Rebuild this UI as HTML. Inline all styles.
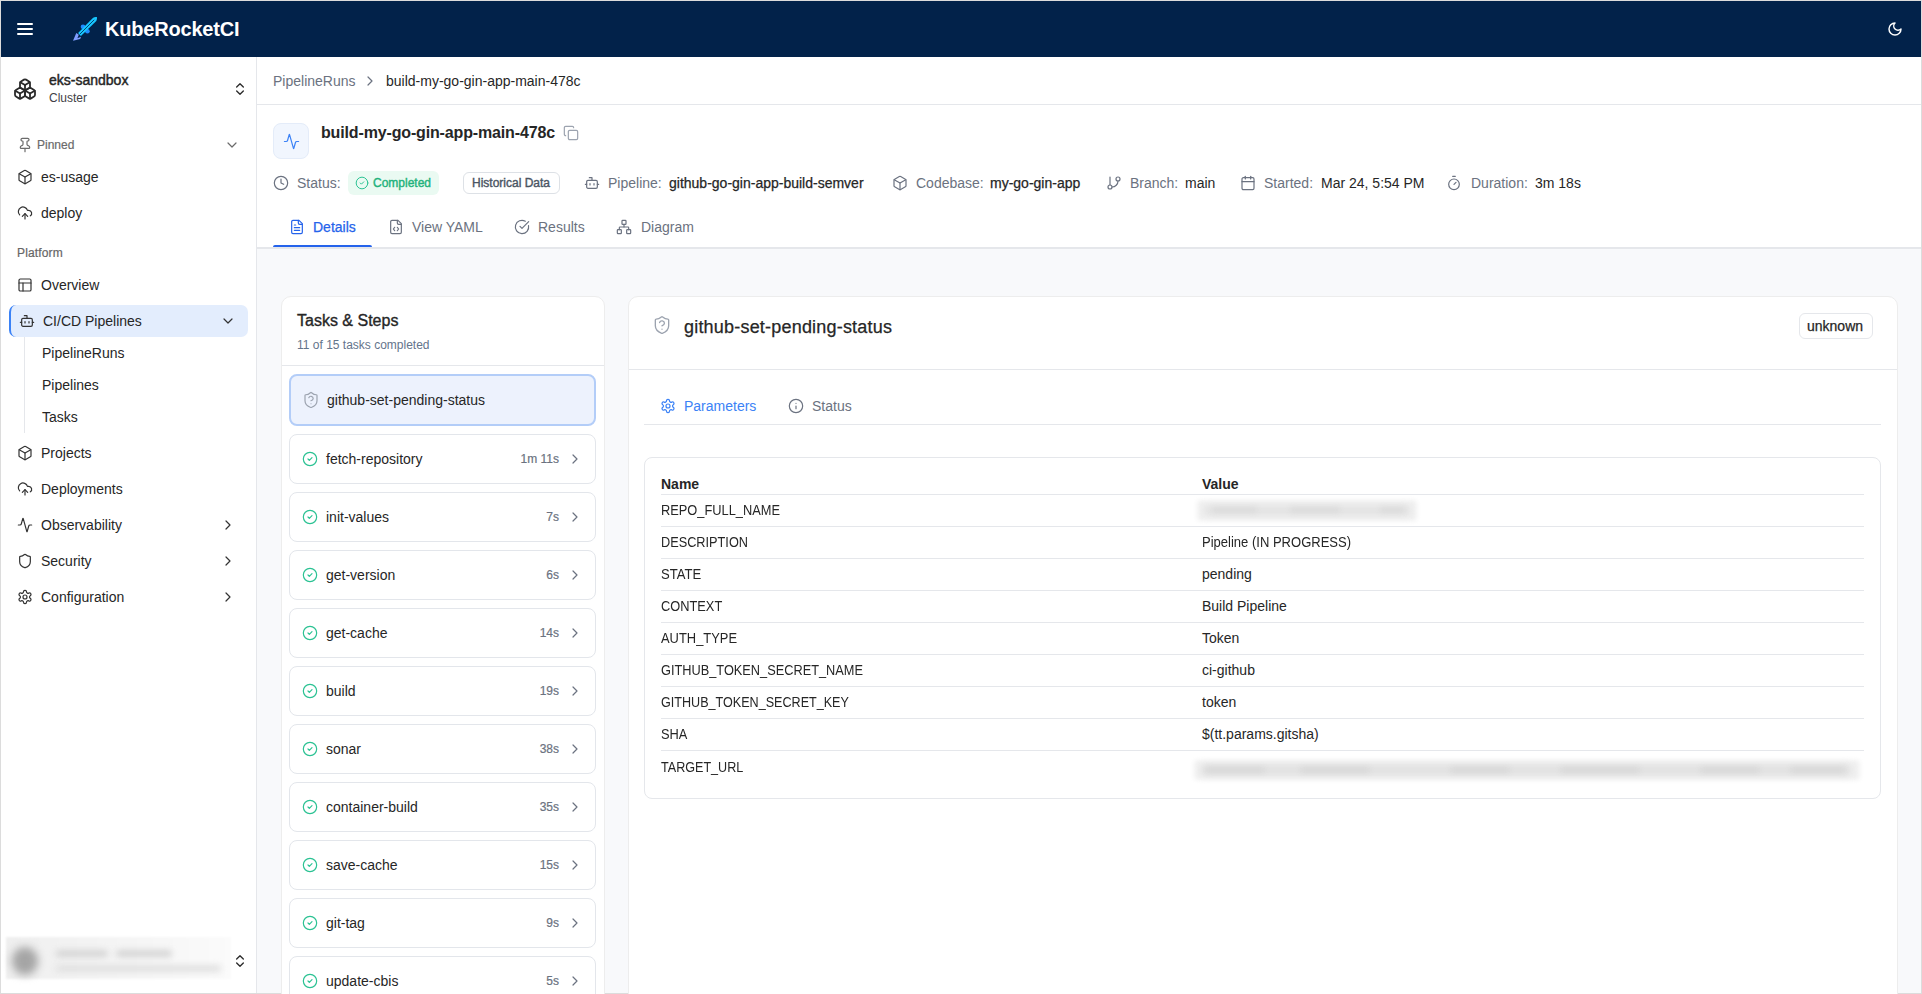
<!DOCTYPE html>
<html><head><meta charset="utf-8"><title>KubeRocketCI</title>
<style>
html,body{margin:0;padding:0;width:1922px;height:994px;overflow:hidden;background:#fff}
body{position:relative;font-family:"Liberation Sans",sans-serif}
.t{position:absolute;white-space:nowrap;line-height:1}
.m{-webkit-text-stroke:0.25px currentColor}
.i{position:absolute;overflow:visible}
.r{position:absolute}
</style></head><body>
<div class="r" style="left:0px;top:0px;width:1922px;height:994px;border:1px solid #dcdcdc;box-sizing:border-box;background:#fff"></div>
<div class="r" style="left:1px;top:1px;width:1920px;height:56px;background:#02224a"></div>
<div class="r" style="left:17px;top:23px;width:16px;height:2px;background:#fff;border-radius:1px"></div>
<div class="r" style="left:17px;top:28px;width:16px;height:2px;background:#fff;border-radius:1px"></div>
<div class="r" style="left:17px;top:33px;width:16px;height:2px;background:#fff;border-radius:1px"></div>
<svg class="i" style="left:68px;top:12px" width="34" height="34" viewBox="0 0 34 34">
<circle cx="15" cy="14.8" r="2.3" fill="#1f8cff"/>
<circle cx="19.4" cy="19.2" r="2.3" fill="#1f8cff"/>
<path d="M28.9 5.1 Q29.4 6.8 28.3 8.9 L12.9 23.9 L10.1 21.1 L25.1 5.7 Q26.9 4.6 28.9 5.1Z" fill="#16c6ff"/>
<path d="M12 22 L26.2 7.8" stroke="#02224a" stroke-width="0.8"/>
<path d="M5 28.8 L8.3 21 L10.8 22.8 L9.4 26.2 L13 24.8 L12.2 27 Z" fill="#7f9dff"/>
</svg>
<div class="t " style="left:105px;top:19px;font-size:20px;color:#ffffff;font-weight:bold;letter-spacing:-0.2px">KubeRocketCI</div>
<svg class="i" style="left:1886.80px;top:21.00px;" width="16" height="16" viewBox="0 0 24 24" fill="none" stroke="#ffffff" stroke-width="2.2" stroke-linecap="round" stroke-linejoin="round"><path d="M12 3a6 6 0 0 0 9 9 9 9 0 1 1-9-9Z"/></svg>
<div class="r" style="left:256px;top:57px;width:1px;height:936px;background:#e5e7eb"></div>
<svg class="i" style="left:13.00px;top:77.00px;" width="24" height="24" viewBox="0 0 24 24" fill="none" stroke="#2b2b2b" stroke-width="1.8" stroke-linecap="round" stroke-linejoin="round"><path d="M2.97 12.92A2 2 0 0 0 2 14.63v3.24a2 2 0 0 0 .97 1.71l3 1.8a2 2 0 0 0 2.06 0L12 19v-5.5l-5-3-4.030 2.42Z"/><path d="m7 16.5-4.74-2.85"/><path d="m7 16.5 5-3"/><path d="M7 16.5v5.17"/><path d="M12 13.5V19l3.97 2.38a2 2 0 0 0 2.06 0l3-1.8a2 2 0 0 0 .97-1.71v-3.24a2 2 0 0 0-.97-1.71L17 10.5l-5 3Z"/><path d="m17 16.5-5-3"/><path d="m17 16.5 4.74-2.85"/><path d="M17 16.5v5.17"/><path d="M7.97 4.42A2 2 0 0 0 7 6.13v4.37l5 3 5-3V6.13a2 2 0 0 0-.97-1.71l-3-1.8a2 2 0 0 0-2.06 0l-3 1.8Z"/><path d="M12 8 7.26 5.15"/><path d="m12 8 4.74-2.85"/><path d="M12 13.5V8"/></svg>
<div class="t " style="left:49px;top:73px;font-size:14px;color:#262626;-webkit-text-stroke:0.45px currentColor">eks-sandbox</div>
<div class="t " style="left:49px;top:92px;font-size:12px;color:#3f3f46;">Cluster</div>
<svg class="i" style="left:232.20px;top:81.20px;" width="16" height="16" viewBox="0 0 24 24" fill="none" stroke="#2b2b2b" stroke-width="2" stroke-linecap="round" stroke-linejoin="round"><path d="m7 15 5 5 5-5"/><path d="m7 9 5-5 5 5"/></svg>
<svg class="i" style="left:16.50px;top:137.00px;" width="16" height="16" viewBox="0 0 24 24" fill="none" stroke="#6b6b6b" stroke-width="1.8" stroke-linecap="round" stroke-linejoin="round"><path d="M12 17v5"/><path d="M9 10.76a2 2 0 0 1-1.11 1.79l-1.78.9A2 2 0 0 0 5 15.24V16a1 1 0 0 0 1 1h12a1 1 0 0 0 1-1v-.76a2 2 0 0 0-1.11-1.79l-1.78-.9A2 2 0 0 1 15 10.76V7a1 1 0 0 1 1-1 2 2 0 0 0 0-4H8a2 2 0 0 0 0 4 1 1 0 0 1 1 1z"/></svg>
<div class="t " style="left:37px;top:139px;font-size:12px;color:#6b6b6b;-webkit-text-stroke:0.2px currentColor">Pinned</div>
<svg class="i" style="left:224.40px;top:137.00px;" width="16" height="16" viewBox="0 0 24 24" fill="none" stroke="#6b6b6b" stroke-width="1.8" stroke-linecap="round" stroke-linejoin="round"><path d="m6 9 6 6 6-6"/></svg>
<svg class="i" style="left:17.00px;top:169.00px;" width="16" height="16" viewBox="0 0 24 24" fill="none" stroke="#333" stroke-width="1.8" stroke-linecap="round" stroke-linejoin="round"><path d="M21 8a2 2 0 0 0-1-1.73l-7-4a2 2 0 0 0-2 0l-7 4A2 2 0 0 0 3 8v8a2 2 0 0 0 1 1.73l7 4a2 2 0 0 0 2 0l7-4A2 2 0 0 0 21 16Z"/><path d="m3.3 7 8.7 5 8.7-5"/><path d="M12 22V12"/></svg>
<div class="t " style="left:41px;top:170px;font-size:14px;color:#262626;">es-usage</div>
<svg class="i" style="left:17.00px;top:205.00px;" width="16" height="16" viewBox="0 0 24 24" fill="none" stroke="#333" stroke-width="1.8" stroke-linecap="round" stroke-linejoin="round"><path d="M12 13v8"/><path d="M4 14.899A7 7 0 1 1 15.71 8h1.79a4.5 4.5 0 0 1 2.5 8.242"/><path d="m8 17 4-4 4 4"/></svg>
<div class="t " style="left:41px;top:206px;font-size:14px;color:#262626;">deploy</div>
<div class="t " style="left:17px;top:247px;font-size:12px;color:#666666;letter-spacing:0.15px;-webkit-text-stroke:0.2px currentColor">Platform</div>
<svg class="i" style="left:17.00px;top:277.00px;" width="16" height="16" viewBox="0 0 24 24" fill="none" stroke="#333" stroke-width="1.8" stroke-linecap="round" stroke-linejoin="round"><rect width="18" height="18" x="3" y="3" rx="2"/><path d="M3 9h18"/><path d="M9 21V9"/></svg>
<div class="t " style="left:41px;top:278px;font-size:14px;color:#262626;">Overview</div>
<div class="r" style="left:9px;top:305px;width:239px;height:32px;background:#e3edfd;border-radius:7px;border-left:2px solid #3b82f6;box-sizing:border-box"></div>
<svg class="i" style="left:18.80px;top:313.00px;" width="16" height="16" viewBox="0 0 24 24" fill="none" stroke="#333" stroke-width="1.8" stroke-linecap="round" stroke-linejoin="round"><path d="M12 8V4H8"/><rect width="16" height="12" x="4" y="8" rx="2"/><path d="M2 14h2"/><path d="M20 14h2"/><path d="M15 13v2"/><path d="M9 13v2"/></svg>
<div class="t " style="left:43px;top:314px;font-size:14px;color:#262626;">CI/CD Pipelines</div>
<svg class="i" style="left:220.20px;top:313.00px;" width="16" height="16" viewBox="0 0 24 24" fill="none" stroke="#333" stroke-width="1.8" stroke-linecap="round" stroke-linejoin="round"><path d="m6 9 6 6 6-6"/></svg>
<div class="r" style="left:24px;top:337px;width:1px;height:96px;background:#e5e7eb"></div>
<div class="t " style="left:42px;top:346px;font-size:14px;color:#262626;">PipelineRuns</div>
<div class="t " style="left:42px;top:378px;font-size:14px;color:#262626;">Pipelines</div>
<div class="t " style="left:42px;top:410px;font-size:14px;color:#262626;">Tasks</div>
<svg class="i" style="left:17.00px;top:445.00px;" width="16" height="16" viewBox="0 0 24 24" fill="none" stroke="#333" stroke-width="1.8" stroke-linecap="round" stroke-linejoin="round"><path d="M21 8a2 2 0 0 0-1-1.73l-7-4a2 2 0 0 0-2 0l-7 4A2 2 0 0 0 3 8v8a2 2 0 0 0 1 1.73l7 4a2 2 0 0 0 2 0l7-4A2 2 0 0 0 21 16Z"/><path d="m3.3 7 8.7 5 8.7-5"/><path d="M12 22V12"/></svg>
<div class="t " style="left:41px;top:446px;font-size:14px;color:#262626;">Projects</div>
<svg class="i" style="left:17.00px;top:481.00px;" width="16" height="16" viewBox="0 0 24 24" fill="none" stroke="#333" stroke-width="1.8" stroke-linecap="round" stroke-linejoin="round"><path d="M12 13v8"/><path d="M4 14.899A7 7 0 1 1 15.71 8h1.79a4.5 4.5 0 0 1 2.5 8.242"/><path d="m8 17 4-4 4 4"/></svg>
<div class="t " style="left:41px;top:482px;font-size:14px;color:#262626;">Deployments</div>
<svg class="i" style="left:17.00px;top:517.00px;" width="16" height="16" viewBox="0 0 24 24" fill="none" stroke="#333" stroke-width="1.8" stroke-linecap="round" stroke-linejoin="round"><path d="M22 12h-2.48a2 2 0 0 0-1.93 1.46l-2.35 8.36a.25.25 0 0 1-.48 0L9.24 2.18a.25.25 0 0 0-.48 0l-2.35 8.36A2 2 0 0 1 4.49 12H2"/></svg>
<div class="t " style="left:41px;top:518px;font-size:14px;color:#262626;">Observability</div>
<svg class="i" style="left:17.00px;top:553.00px;" width="16" height="16" viewBox="0 0 24 24" fill="none" stroke="#333" stroke-width="1.8" stroke-linecap="round" stroke-linejoin="round"><path d="M20 13c0 5-3.5 7.5-7.66 8.95a1 1 0 0 1-.67-.01C7.5 20.5 4 18 4 13V6a1 1 0 0 1 1-1c2 0 4.5-1.2 6.24-2.72a1.17 1.17 0 0 1 1.52 0C14.51 3.810 17 5 19 5a1 1 0 0 1 1 1z"/></svg>
<div class="t " style="left:41px;top:554px;font-size:14px;color:#262626;">Security</div>
<svg class="i" style="left:17.00px;top:589.00px;" width="16" height="16" viewBox="0 0 24 24" fill="none" stroke="#333" stroke-width="1.8" stroke-linecap="round" stroke-linejoin="round"><path d="M12.22 2h-.44a2 2 0 0 0-2 2v.18a2 2 0 0 1-1 1.73l-.43.25a2 2 0 0 1-2 0l-.15-.08a2 2 0 0 0-2.73.73l-.22.38a2 2 0 0 0 .73 2.73l.15.1a2 2 0 0 1 1 1.72v.51a2 2 0 0 1-1 1.74l-.15.09a2 2 0 0 0-.73 2.73l.22.38a2 2 0 0 0 2.73.73l.15-.08a2 2 0 0 1 2 0l.43.25a2 2 0 0 1 1 1.73V20a2 2 0 0 0 2 2h.44a2 2 0 0 0 2-2v-.18a2 2 0 0 1 1-1.73l.43-.25a2 2 0 0 1 2 0l.15.08a2 2 0 0 0 2.73-.73l.22-.39a2 2 0 0 0-.73-2.73l-.15-.08a2 2 0 0 1-1-1.74v-.5a2 2 0 0 1 1-1.74l.15-.09a2 2 0 0 0 .73-2.73l-.22-.38a2 2 0 0 0-2.73-.73l-.15.08a2 2 0 0 1-2 0l-.43-.25a2 2 0 0 1-1-1.73V4a2 2 0 0 0-2-2z"/><circle cx="12" cy="12" r="3"/></svg>
<div class="t " style="left:41px;top:590px;font-size:14px;color:#262626;">Configuration</div>
<svg class="i" style="left:220.00px;top:517.00px;" width="16" height="16" viewBox="0 0 24 24" fill="none" stroke="#333" stroke-width="1.8" stroke-linecap="round" stroke-linejoin="round"><path d="m9 18 6-6-6-6"/></svg>
<svg class="i" style="left:220.00px;top:553.00px;" width="16" height="16" viewBox="0 0 24 24" fill="none" stroke="#333" stroke-width="1.8" stroke-linecap="round" stroke-linejoin="round"><path d="m9 18 6-6-6-6"/></svg>
<svg class="i" style="left:220.00px;top:589.00px;" width="16" height="16" viewBox="0 0 24 24" fill="none" stroke="#333" stroke-width="1.8" stroke-linecap="round" stroke-linejoin="round"><path d="m9 18 6-6-6-6"/></svg>
<div class="r" style="left:6px;top:937px;width:225px;height:42px;background:linear-gradient(90deg,#efefef,#f6f6f6 60%,#fbfbfb);filter:blur(1px)"></div>
<div class="r" style="left:12px;top:947px;width:26px;height:28px;background:#a5a5a5;border-radius:50%;filter:blur(4px)"></div>
<div class="r" style="left:56px;top:950px;width:52px;height:7px;background:#d4d4d4;border-radius:4px;filter:blur(3px)"></div>
<div class="r" style="left:116px;top:950px;width:56px;height:7px;background:#d4d4d4;border-radius:4px;filter:blur(3px)"></div>
<div class="r" style="left:56px;top:965px;width:165px;height:7px;background:#e0e0e0;border-radius:4px;filter:blur(3px)"></div>
<svg class="i" style="left:232.00px;top:953.00px;" width="16" height="16" viewBox="0 0 24 24" fill="none" stroke="#2b2b2b" stroke-width="2" stroke-linecap="round" stroke-linejoin="round"><path d="m7 15 5 5 5-5"/><path d="m7 9 5-5 5 5"/></svg>
<div class="r" style="left:257px;top:104px;width:1664px;height:1px;background:#e5e7eb"></div>
<div class="t " style="left:273px;top:74px;font-size:14px;color:#6b7280;">PipelineRuns</div>
<svg class="i" style="left:362.00px;top:73.00px;" width="16" height="16" viewBox="0 0 24 24" fill="none" stroke="#6b7280" stroke-width="1.8" stroke-linecap="round" stroke-linejoin="round"><path d="m9 18 6-6-6-6"/></svg>
<div class="t " style="left:386px;top:74px;font-size:14px;color:#262626;">build-my-go-gin-app-main-478c</div>
<div class="r" style="left:273px;top:123px;width:36px;height:36px;background:#f1f6fe;border:1px solid #e4ecf9;border-radius:8px;box-sizing:border-box"></div>
<svg class="i" style="left:282.50px;top:132.50px;" width="17" height="17" viewBox="0 0 24 24" fill="none" stroke="#3b82f6" stroke-width="1.7" stroke-linecap="round" stroke-linejoin="round"><path d="M22 12h-2.48a2 2 0 0 0-1.93 1.46l-2.35 8.36a.25.25 0 0 1-.48 0L9.24 2.18a.25.25 0 0 0-.48 0l-2.35 8.36A2 2 0 0 1 4.49 12H2"/></svg>
<div class="t " style="left:321px;top:125px;font-size:16px;color:#262626;font-weight:bold;letter-spacing:-0.15px">build-my-go-gin-app-main-478c</div>
<svg class="i" style="left:563.00px;top:124.70px;" width="16" height="16" viewBox="0 0 24 24" fill="none" stroke="#9ca3af" stroke-width="1.8" stroke-linecap="round" stroke-linejoin="round"><rect width="14" height="14" x="8" y="8" rx="2" ry="2"/><path d="M4 16c-1.1 0-2-.9-2-2V4c0-1.1.9-2 2-2h10c1.1 0 2 .9 2 2"/></svg>
<svg class="i" style="left:273.00px;top:174.70px;" width="16" height="16" viewBox="0 0 24 24" fill="none" stroke="#6b7280" stroke-width="1.8" stroke-linecap="round" stroke-linejoin="round"><circle cx="12" cy="12" r="10"/><path d="M12 6v6l4 2"/></svg>
<div class="t " style="left:297px;top:176px;font-size:14px;color:#6b7280;">Status:</div>
<div class="r" style="left:348px;top:171px;width:91px;height:24px;background:#eafaf2;border-radius:6px"></div>
<svg class="i" style="left:354.80px;top:176.00px;" width="14" height="14" viewBox="0 0 24 24" fill="none" stroke="#2bc293" stroke-width="1.7" stroke-linecap="round" stroke-linejoin="round"><circle cx="12" cy="12" r="10"/><path d="m9 12 2 2 4-4"/></svg>
<div class="t " style="left:373px;top:177px;font-size:12px;color:#1fb27c;-webkit-text-stroke:0.4px currentColor">Completed</div>
<div class="r" style="left:463px;top:172px;width:97px;height:22px;border:1px solid #dde1e6;border-radius:6px;box-sizing:border-box"></div>
<div class="t " style="left:472px;top:177px;font-size:12px;color:#4b5563;-webkit-text-stroke:0.4px currentColor">Historical Data</div>
<svg class="i" style="left:583.70px;top:175.00px;" width="16" height="16" viewBox="0 0 24 24" fill="none" stroke="#6b7280" stroke-width="1.8" stroke-linecap="round" stroke-linejoin="round"><path d="M12 8V4H8"/><rect width="16" height="12" x="4" y="8" rx="2"/><path d="M2 14h2"/><path d="M20 14h2"/><path d="M15 13v2"/><path d="M9 13v2"/></svg>
<div class="t " style="left:608px;top:176px;font-size:14px;color:#6b7280;">Pipeline:</div>
<div class="t m" style="left:669px;top:176px;font-size:14px;color:#262626;">github-go-gin-app-build-semver</div>
<svg class="i" style="left:892.00px;top:175.00px;" width="16" height="16" viewBox="0 0 24 24" fill="none" stroke="#6b7280" stroke-width="1.8" stroke-linecap="round" stroke-linejoin="round"><path d="M21 8a2 2 0 0 0-1-1.73l-7-4a2 2 0 0 0-2 0l-7 4A2 2 0 0 0 3 8v8a2 2 0 0 0 1 1.73l7 4a2 2 0 0 0 2 0l7-4A2 2 0 0 0 21 16Z"/><path d="m3.3 7 8.7 5 8.7-5"/><path d="M12 22V12"/></svg>
<div class="t " style="left:916px;top:176px;font-size:14px;color:#6b7280;">Codebase:</div>
<div class="t m" style="left:990px;top:176px;font-size:14px;color:#262626;">my-go-gin-app</div>
<svg class="i" style="left:1105.80px;top:175.00px;" width="16" height="16" viewBox="0 0 24 24" fill="none" stroke="#6b7280" stroke-width="1.8" stroke-linecap="round" stroke-linejoin="round"><path d="M6 3v12"/><circle cx="18" cy="6" r="3"/><circle cx="6" cy="18" r="3"/><path d="M18 9a9 9 0 0 1-9 9"/></svg>
<div class="t " style="left:1130px;top:176px;font-size:14px;color:#6b7280;">Branch:</div>
<div class="t " style="left:1185px;top:176px;font-size:14px;color:#262626;">main</div>
<svg class="i" style="left:1239.80px;top:175.00px;" width="16" height="16" viewBox="0 0 24 24" fill="none" stroke="#6b7280" stroke-width="1.8" stroke-linecap="round" stroke-linejoin="round"><path d="M8 2v4"/><path d="M16 2v4"/><rect width="18" height="18" x="3" y="4" rx="2"/><path d="M3 10h18"/></svg>
<div class="t " style="left:1264px;top:176px;font-size:14px;color:#6b7280;">Started:</div>
<div class="t " style="left:1321px;top:176px;font-size:14px;color:#262626;">Mar 24, 5:54 PM</div>
<svg class="i" style="left:1446.00px;top:175.00px;" width="16" height="16" viewBox="0 0 24 24" fill="none" stroke="#6b7280" stroke-width="1.8" stroke-linecap="round" stroke-linejoin="round"><path d="M10 2h4"/><path d="M12 14l3-3"/><circle cx="12" cy="14" r="8"/></svg>
<div class="t " style="left:1471px;top:176px;font-size:14px;color:#6b7280;">Duration:</div>
<div class="t " style="left:1535px;top:176px;font-size:14px;color:#262626;">3m 18s</div>
<svg class="i" style="left:289.00px;top:219.00px;" width="16" height="16" viewBox="0 0 24 24" fill="none" stroke="#2563eb" stroke-width="1.8" stroke-linecap="round" stroke-linejoin="round"><path d="M15 2H6a2 2 0 0 0-2 2v16a2 2 0 0 0 2 2h12a2 2 0 0 0 2-2V7Z"/><path d="M14 2v4a2 2 0 0 0 2 2h4"/><path d="M10 9H8"/><path d="M16 13H8"/><path d="M16 17H8"/></svg>
<div class="t m" style="left:313px;top:220px;font-size:14px;color:#2563eb;">Details</div>
<svg class="i" style="left:388.20px;top:219.00px;" width="16" height="16" viewBox="0 0 24 24" fill="none" stroke="#6b7280" stroke-width="1.8" stroke-linecap="round" stroke-linejoin="round"><path d="M10 12.5 8 15l2 2.5"/><path d="m14 12.5 2 2.5-2 2.5"/><path d="M14 2v4a2 2 0 0 0 2 2h4"/><path d="M15 2H6a2 2 0 0 0-2 2v16a2 2 0 0 0 2 2h12a2 2 0 0 0 2-2V7z"/></svg>
<div class="t " style="left:412px;top:220px;font-size:14px;color:#6b7280;">View YAML</div>
<svg class="i" style="left:514.10px;top:219.00px;" width="16" height="16" viewBox="0 0 24 24" fill="none" stroke="#6b7280" stroke-width="1.8" stroke-linecap="round" stroke-linejoin="round"><path d="M21.801 10A10 10 0 1 1 17 3.335"/><path d="m9 11 3 3L22 4"/></svg>
<div class="t " style="left:538px;top:220px;font-size:14px;color:#6b7280;">Results</div>
<svg class="i" style="left:615.60px;top:219.00px;" width="16" height="16" viewBox="0 0 24 24" fill="none" stroke="#6b7280" stroke-width="1.8" stroke-linecap="round" stroke-linejoin="round"><rect x="16" y="16" width="6" height="6" rx="1"/><rect x="2" y="16" width="6" height="6" rx="1"/><rect x="9" y="2" width="6" height="6" rx="1"/><path d="M5 16v-3a1 1 0 0 1 1-1h12a1 1 0 0 1 1 1v3"/><path d="M12 12V8"/></svg>
<div class="t " style="left:641px;top:220px;font-size:14px;color:#6b7280;">Diagram</div>
<div class="r" style="left:257px;top:247px;width:1664px;height:2px;background:#e5e7eb"></div>
<div class="r" style="left:273px;top:245px;width:99px;height:2px;background:#2563eb;border-radius:2px 2px 0 0"></div>
<div class="r" style="left:257px;top:249px;width:1664px;height:744px;background:#f8f9fb"></div>
<div class="r" style="left:281px;top:296px;width:324px;height:721px;background:#fff;border:1px solid #ededed;border-radius:10px;box-sizing:border-box"></div>
<div class="t " style="left:297px;top:313px;font-size:16px;color:#262626;-webkit-text-stroke:0.35px currentColor">Tasks &amp; Steps</div>
<div class="t " style="left:297px;top:339px;font-size:12px;color:#64748b;">11 of 15 tasks completed</div>
<div class="r" style="left:282px;top:365px;width:322px;height:1px;background:#e5e7eb"></div>
<div class="r" style="left:289px;top:374px;width:307px;height:52px;background:#edf2fd;border:2px solid #b3cdf8;border-radius:8px;box-sizing:border-box"></div>
<svg class="i" style="left:302.00px;top:391.00px;" width="18" height="18" viewBox="0 0 24 24" fill="none" stroke="#9ca3af" stroke-width="1.6" stroke-linecap="round" stroke-linejoin="round"><path d="M20 13c0 5-3.5 7.5-7.66 8.95a1 1 0 0 1-.67-.01C7.5 20.5 4 18 4 13V6a1 1 0 0 1 1-1c2 0 4.5-1.2 6.24-2.72a1.17 1.17 0 0 1 1.52 0C14.51 3.810 17 5 19 5a1 1 0 0 1 1 1z"/><path d="M9.1 9a3 3 0 0 1 5.82 1c0 2-3 3-3 3"/><path d="M12 17h.01"/></svg>
<div class="t " style="left:327px;top:393px;font-size:14px;color:#262626;">github-set-pending-status</div>
<div class="r" style="left:289px;top:434px;width:307px;height:50px;background:#fff;border:1px solid #e3e6eb;border-radius:8px;box-sizing:border-box"></div>
<svg class="i" style="left:302.20px;top:450.80px;" width="16" height="16" viewBox="0 0 24 24" fill="none" stroke="#2bc293" stroke-width="1.8" stroke-linecap="round" stroke-linejoin="round"><circle cx="12" cy="12" r="10"/><path d="m9 12 2 2 4-4"/></svg>
<div class="t " style="left:326px;top:452px;font-size:14px;color:#262626;">fetch-repository</div>
<div class="t " style="right:1363px;top:453px;font-size:12px;color:#6b7280;-webkit-text-stroke:0.2px currentColor">1m 11s</div>
<svg class="i" style="left:567.00px;top:450.80px;" width="16" height="16" viewBox="0 0 24 24" fill="none" stroke="#6b7280" stroke-width="1.8" stroke-linecap="round" stroke-linejoin="round"><path d="m9 18 6-6-6-6"/></svg>
<div class="r" style="left:289px;top:492px;width:307px;height:50px;background:#fff;border:1px solid #e3e6eb;border-radius:8px;box-sizing:border-box"></div>
<svg class="i" style="left:302.20px;top:508.80px;" width="16" height="16" viewBox="0 0 24 24" fill="none" stroke="#2bc293" stroke-width="1.8" stroke-linecap="round" stroke-linejoin="round"><circle cx="12" cy="12" r="10"/><path d="m9 12 2 2 4-4"/></svg>
<div class="t " style="left:326px;top:510px;font-size:14px;color:#262626;">init-values</div>
<div class="t " style="right:1363px;top:511px;font-size:12px;color:#6b7280;-webkit-text-stroke:0.2px currentColor">7s</div>
<svg class="i" style="left:567.00px;top:508.80px;" width="16" height="16" viewBox="0 0 24 24" fill="none" stroke="#6b7280" stroke-width="1.8" stroke-linecap="round" stroke-linejoin="round"><path d="m9 18 6-6-6-6"/></svg>
<div class="r" style="left:289px;top:550px;width:307px;height:50px;background:#fff;border:1px solid #e3e6eb;border-radius:8px;box-sizing:border-box"></div>
<svg class="i" style="left:302.20px;top:566.80px;" width="16" height="16" viewBox="0 0 24 24" fill="none" stroke="#2bc293" stroke-width="1.8" stroke-linecap="round" stroke-linejoin="round"><circle cx="12" cy="12" r="10"/><path d="m9 12 2 2 4-4"/></svg>
<div class="t " style="left:326px;top:568px;font-size:14px;color:#262626;">get-version</div>
<div class="t " style="right:1363px;top:569px;font-size:12px;color:#6b7280;-webkit-text-stroke:0.2px currentColor">6s</div>
<svg class="i" style="left:567.00px;top:566.80px;" width="16" height="16" viewBox="0 0 24 24" fill="none" stroke="#6b7280" stroke-width="1.8" stroke-linecap="round" stroke-linejoin="round"><path d="m9 18 6-6-6-6"/></svg>
<div class="r" style="left:289px;top:608px;width:307px;height:50px;background:#fff;border:1px solid #e3e6eb;border-radius:8px;box-sizing:border-box"></div>
<svg class="i" style="left:302.20px;top:624.80px;" width="16" height="16" viewBox="0 0 24 24" fill="none" stroke="#2bc293" stroke-width="1.8" stroke-linecap="round" stroke-linejoin="round"><circle cx="12" cy="12" r="10"/><path d="m9 12 2 2 4-4"/></svg>
<div class="t " style="left:326px;top:626px;font-size:14px;color:#262626;">get-cache</div>
<div class="t " style="right:1363px;top:627px;font-size:12px;color:#6b7280;-webkit-text-stroke:0.2px currentColor">14s</div>
<svg class="i" style="left:567.00px;top:624.80px;" width="16" height="16" viewBox="0 0 24 24" fill="none" stroke="#6b7280" stroke-width="1.8" stroke-linecap="round" stroke-linejoin="round"><path d="m9 18 6-6-6-6"/></svg>
<div class="r" style="left:289px;top:666px;width:307px;height:50px;background:#fff;border:1px solid #e3e6eb;border-radius:8px;box-sizing:border-box"></div>
<svg class="i" style="left:302.20px;top:682.80px;" width="16" height="16" viewBox="0 0 24 24" fill="none" stroke="#2bc293" stroke-width="1.8" stroke-linecap="round" stroke-linejoin="round"><circle cx="12" cy="12" r="10"/><path d="m9 12 2 2 4-4"/></svg>
<div class="t " style="left:326px;top:684px;font-size:14px;color:#262626;">build</div>
<div class="t " style="right:1363px;top:685px;font-size:12px;color:#6b7280;-webkit-text-stroke:0.2px currentColor">19s</div>
<svg class="i" style="left:567.00px;top:682.80px;" width="16" height="16" viewBox="0 0 24 24" fill="none" stroke="#6b7280" stroke-width="1.8" stroke-linecap="round" stroke-linejoin="round"><path d="m9 18 6-6-6-6"/></svg>
<div class="r" style="left:289px;top:724px;width:307px;height:50px;background:#fff;border:1px solid #e3e6eb;border-radius:8px;box-sizing:border-box"></div>
<svg class="i" style="left:302.20px;top:740.80px;" width="16" height="16" viewBox="0 0 24 24" fill="none" stroke="#2bc293" stroke-width="1.8" stroke-linecap="round" stroke-linejoin="round"><circle cx="12" cy="12" r="10"/><path d="m9 12 2 2 4-4"/></svg>
<div class="t " style="left:326px;top:742px;font-size:14px;color:#262626;">sonar</div>
<div class="t " style="right:1363px;top:743px;font-size:12px;color:#6b7280;-webkit-text-stroke:0.2px currentColor">38s</div>
<svg class="i" style="left:567.00px;top:740.80px;" width="16" height="16" viewBox="0 0 24 24" fill="none" stroke="#6b7280" stroke-width="1.8" stroke-linecap="round" stroke-linejoin="round"><path d="m9 18 6-6-6-6"/></svg>
<div class="r" style="left:289px;top:782px;width:307px;height:50px;background:#fff;border:1px solid #e3e6eb;border-radius:8px;box-sizing:border-box"></div>
<svg class="i" style="left:302.20px;top:798.80px;" width="16" height="16" viewBox="0 0 24 24" fill="none" stroke="#2bc293" stroke-width="1.8" stroke-linecap="round" stroke-linejoin="round"><circle cx="12" cy="12" r="10"/><path d="m9 12 2 2 4-4"/></svg>
<div class="t " style="left:326px;top:800px;font-size:14px;color:#262626;">container-build</div>
<div class="t " style="right:1363px;top:801px;font-size:12px;color:#6b7280;-webkit-text-stroke:0.2px currentColor">35s</div>
<svg class="i" style="left:567.00px;top:798.80px;" width="16" height="16" viewBox="0 0 24 24" fill="none" stroke="#6b7280" stroke-width="1.8" stroke-linecap="round" stroke-linejoin="round"><path d="m9 18 6-6-6-6"/></svg>
<div class="r" style="left:289px;top:840px;width:307px;height:50px;background:#fff;border:1px solid #e3e6eb;border-radius:8px;box-sizing:border-box"></div>
<svg class="i" style="left:302.20px;top:856.80px;" width="16" height="16" viewBox="0 0 24 24" fill="none" stroke="#2bc293" stroke-width="1.8" stroke-linecap="round" stroke-linejoin="round"><circle cx="12" cy="12" r="10"/><path d="m9 12 2 2 4-4"/></svg>
<div class="t " style="left:326px;top:858px;font-size:14px;color:#262626;">save-cache</div>
<div class="t " style="right:1363px;top:859px;font-size:12px;color:#6b7280;-webkit-text-stroke:0.2px currentColor">15s</div>
<svg class="i" style="left:567.00px;top:856.80px;" width="16" height="16" viewBox="0 0 24 24" fill="none" stroke="#6b7280" stroke-width="1.8" stroke-linecap="round" stroke-linejoin="round"><path d="m9 18 6-6-6-6"/></svg>
<div class="r" style="left:289px;top:898px;width:307px;height:50px;background:#fff;border:1px solid #e3e6eb;border-radius:8px;box-sizing:border-box"></div>
<svg class="i" style="left:302.20px;top:914.80px;" width="16" height="16" viewBox="0 0 24 24" fill="none" stroke="#2bc293" stroke-width="1.8" stroke-linecap="round" stroke-linejoin="round"><circle cx="12" cy="12" r="10"/><path d="m9 12 2 2 4-4"/></svg>
<div class="t " style="left:326px;top:916px;font-size:14px;color:#262626;">git-tag</div>
<div class="t " style="right:1363px;top:917px;font-size:12px;color:#6b7280;-webkit-text-stroke:0.2px currentColor">9s</div>
<svg class="i" style="left:567.00px;top:914.80px;" width="16" height="16" viewBox="0 0 24 24" fill="none" stroke="#6b7280" stroke-width="1.8" stroke-linecap="round" stroke-linejoin="round"><path d="m9 18 6-6-6-6"/></svg>
<div class="r" style="left:289px;top:956px;width:307px;height:50px;background:#fff;border:1px solid #e3e6eb;border-radius:8px;box-sizing:border-box"></div>
<svg class="i" style="left:302.20px;top:972.80px;" width="16" height="16" viewBox="0 0 24 24" fill="none" stroke="#2bc293" stroke-width="1.8" stroke-linecap="round" stroke-linejoin="round"><circle cx="12" cy="12" r="10"/><path d="m9 12 2 2 4-4"/></svg>
<div class="t " style="left:326px;top:974px;font-size:14px;color:#262626;">update-cbis</div>
<div class="t " style="right:1363px;top:975px;font-size:12px;color:#6b7280;-webkit-text-stroke:0.2px currentColor">5s</div>
<svg class="i" style="left:567.00px;top:972.80px;" width="16" height="16" viewBox="0 0 24 24" fill="none" stroke="#6b7280" stroke-width="1.8" stroke-linecap="round" stroke-linejoin="round"><path d="m9 18 6-6-6-6"/></svg>
<div class="r" style="left:628px;top:296px;width:1270px;height:721px;background:#fff;border:1px solid #ededed;border-radius:10px;box-sizing:border-box"></div>
<svg class="i" style="left:652.00px;top:315.00px;" width="20" height="20" viewBox="0 0 24 24" fill="none" stroke="#9ca3af" stroke-width="1.6" stroke-linecap="round" stroke-linejoin="round"><path d="M20 13c0 5-3.5 7.5-7.66 8.95a1 1 0 0 1-.67-.01C7.5 20.5 4 18 4 13V6a1 1 0 0 1 1-1c2 0 4.5-1.2 6.24-2.72a1.17 1.17 0 0 1 1.52 0C14.51 3.810 17 5 19 5a1 1 0 0 1 1 1z"/><path d="M9.1 9a3 3 0 0 1 5.82 1c0 2-3 3-3 3"/><path d="M12 17h.01"/></svg>
<div class="t m" style="left:684px;top:318px;font-size:18px;color:#262626;letter-spacing:0.2px">github-set-pending-status</div>
<div class="r" style="left:1799px;top:313px;width:74px;height:26px;border:1px solid #e5e7eb;border-radius:6px;box-sizing:border-box"></div>
<div class="t m" style="left:1807px;top:319px;font-size:14px;color:#262626;">unknown</div>
<div class="r" style="left:629px;top:369px;width:1268px;height:1px;background:#e5e7eb"></div>
<svg class="i" style="left:659.70px;top:398.20px;" width="16" height="16" viewBox="0 0 24 24" fill="none" stroke="#3b82f6" stroke-width="1.8" stroke-linecap="round" stroke-linejoin="round"><path d="M12.22 2h-.44a2 2 0 0 0-2 2v.18a2 2 0 0 1-1 1.73l-.43.25a2 2 0 0 1-2 0l-.15-.08a2 2 0 0 0-2.73.73l-.22.38a2 2 0 0 0 .73 2.73l.15.1a2 2 0 0 1 1 1.72v.51a2 2 0 0 1-1 1.74l-.15.09a2 2 0 0 0-.73 2.73l.22.38a2 2 0 0 0 2.73.73l.15-.08a2 2 0 0 1 2 0l.43.25a2 2 0 0 1 1 1.73V20a2 2 0 0 0 2 2h.44a2 2 0 0 0 2-2v-.18a2 2 0 0 1 1-1.73l.43-.25a2 2 0 0 1 2 0l.15.08a2 2 0 0 0 2.73-.73l.22-.39a2 2 0 0 0-.73-2.73l-.15-.08a2 2 0 0 1-1-1.74v-.5a2 2 0 0 1 1-1.74l.15-.09a2 2 0 0 0 .73-2.73l-.22-.38a2 2 0 0 0-2.73-.73l-.15.08a2 2 0 0 1-2 0l-.43-.25a2 2 0 0 1-1-1.73V4a2 2 0 0 0-2-2z"/><circle cx="12" cy="12" r="3"/></svg>
<div class="t " style="left:684px;top:399px;font-size:14px;color:#3b82f6;">Parameters</div>
<svg class="i" style="left:787.60px;top:398.00px;" width="16" height="16" viewBox="0 0 24 24" fill="none" stroke="#6b7280" stroke-width="1.8" stroke-linecap="round" stroke-linejoin="round"><circle cx="12" cy="12" r="10"/><path d="M12 16v-4"/><path d="M12 8h.01"/></svg>
<div class="t " style="left:812px;top:399px;font-size:14px;color:#6b7280;">Status</div>
<div class="r" style="left:644px;top:424px;width:1237px;height:1px;background:#e5e7eb"></div>
<div class="r" style="left:644px;top:457px;width:1237px;height:342px;border:1px solid #e5e7eb;border-radius:8px;box-sizing:border-box"></div>
<div class="t " style="left:661px;top:477px;font-size:14px;color:#262626;font-weight:bold">Name</div>
<div class="t " style="left:1202px;top:477px;font-size:14px;color:#262626;font-weight:bold">Value</div>
<div class="r" style="left:661px;top:494px;width:1203px;height:1px;background:#e5e7eb"></div>
<div class="t " style="left:661px;top:503px;font-size:14px;color:#262626;transform:scaleX(0.916);transform-origin:0 0;">REPO_FULL_NAME</div>
<div class="r" style="left:661px;top:526px;width:1203px;height:1px;background:#e5e7eb"></div>
<div class="t " style="left:661px;top:535px;font-size:14px;color:#262626;transform:scaleX(0.909);transform-origin:0 0;">DESCRIPTION</div>
<div class="t " style="left:1202px;top:535px;font-size:14px;color:#262626;transform:scaleX(0.93);transform-origin:0 0;">Pipeline (IN PROGRESS)</div>
<div class="r" style="left:661px;top:558px;width:1203px;height:1px;background:#e5e7eb"></div>
<div class="t " style="left:661px;top:567px;font-size:14px;color:#262626;transform:scaleX(0.934);transform-origin:0 0;">STATE</div>
<div class="t " style="left:1202px;top:567px;font-size:14px;color:#262626;">pending</div>
<div class="r" style="left:661px;top:590px;width:1203px;height:1px;background:#e5e7eb"></div>
<div class="t " style="left:661px;top:599px;font-size:14px;color:#262626;transform:scaleX(0.915);transform-origin:0 0;">CONTEXT</div>
<div class="t " style="left:1202px;top:599px;font-size:14px;color:#262626;">Build Pipeline</div>
<div class="r" style="left:661px;top:622px;width:1203px;height:1px;background:#e5e7eb"></div>
<div class="t " style="left:661px;top:631px;font-size:14px;color:#262626;transform:scaleX(0.922);transform-origin:0 0;">AUTH_TYPE</div>
<div class="t " style="left:1202px;top:631px;font-size:14px;color:#262626;">Token</div>
<div class="r" style="left:661px;top:654px;width:1203px;height:1px;background:#e5e7eb"></div>
<div class="t " style="left:661px;top:663px;font-size:14px;color:#262626;transform:scaleX(0.912);transform-origin:0 0;">GITHUB_TOKEN_SECRET_NAME</div>
<div class="t " style="left:1202px;top:663px;font-size:14px;color:#262626;">ci-github</div>
<div class="r" style="left:661px;top:686px;width:1203px;height:1px;background:#e5e7eb"></div>
<div class="t " style="left:661px;top:695px;font-size:14px;color:#262626;transform:scaleX(0.899);transform-origin:0 0;">GITHUB_TOKEN_SECRET_KEY</div>
<div class="t " style="left:1202px;top:695px;font-size:14px;color:#262626;">token</div>
<div class="r" style="left:661px;top:718px;width:1203px;height:1px;background:#e5e7eb"></div>
<div class="t " style="left:661px;top:727px;font-size:14px;color:#262626;transform:scaleX(0.917);transform-origin:0 0;">SHA</div>
<div class="t " style="left:1202px;top:727px;font-size:14px;color:#262626;">$(tt.params.gitsha)</div>
<div class="r" style="left:661px;top:750px;width:1203px;height:1px;background:#e5e7eb"></div>
<div class="t " style="left:661px;top:760px;font-size:14px;color:#262626;transform:scaleX(0.898);transform-origin:0 0;">TARGET_URL</div>
<div class="r" style="left:1197px;top:500px;width:220px;height:21px;background:#f1f1f1;filter:blur(2px);border-radius:4px"></div>
<div class="r" style="left:1203px;top:505px;width:208px;height:11px;background:#e4e4e4;border-radius:5px;filter:blur(3px)"></div>
<div class="r" style="left:1212px;top:507px;width:45px;height:6px;background:#dcdcdc;border-radius:3px;filter:blur(2.5px)"></div>
<div class="r" style="left:1290px;top:507px;width:50px;height:6px;background:#dcdcdc;border-radius:3px;filter:blur(2.5px)"></div>
<div class="r" style="left:1380px;top:507px;width:25px;height:6px;background:#dcdcdc;border-radius:3px;filter:blur(2.5px)"></div>
<div class="r" style="left:1194px;top:760px;width:666px;height:20px;background:#f1f1f1;filter:blur(2px);border-radius:4px"></div>
<div class="r" style="left:1200px;top:764px;width:652px;height:12px;background:#e2e2e2;border-radius:6px;filter:blur(3px)"></div>
<div class="r" style="left:1205px;top:767px;width:60px;height:6px;background:#d9d9d9;border-radius:3px;filter:blur(2.5px)"></div>
<div class="r" style="left:1300px;top:767px;width:70px;height:6px;background:#d9d9d9;border-radius:3px;filter:blur(2.5px)"></div>
<div class="r" style="left:1450px;top:767px;width:60px;height:6px;background:#d9d9d9;border-radius:3px;filter:blur(2.5px)"></div>
<div class="r" style="left:1560px;top:767px;width:80px;height:6px;background:#d9d9d9;border-radius:3px;filter:blur(2.5px)"></div>
<div class="r" style="left:1700px;top:767px;width:60px;height:6px;background:#d9d9d9;border-radius:3px;filter:blur(2.5px)"></div>
<div class="r" style="left:1790px;top:767px;width:55px;height:6px;background:#d9d9d9;border-radius:3px;filter:blur(2.5px)"></div>
</body></html>
